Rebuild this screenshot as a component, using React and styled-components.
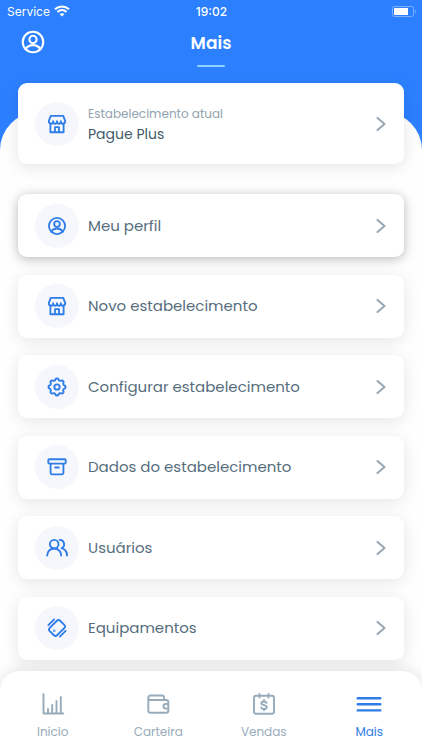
import React, { useState } from 'react'
import styled, { createGlobalStyle } from 'styled-components'

const GlobalStyle = createGlobalStyle`
    *{
        box-sizing: border-box;
    }
    body{
        margin: 0;
        background: #2c80ff;
        font-family: Poppins, Inter, "Open Sans", sans-serif;
    }
    button{
        font-family: inherit;
        border: none;
        padding: 0;
        background: none;
        cursor: pointer;
    }
`;

const Svg = ({ size = 22, width = 2, box = '0 0 24 24', children }) => (
    <svg width={size} height={size} viewBox={box} fill="none" stroke="currentColor"
        strokeWidth={width} strokeLinecap="round" strokeLinejoin="round" aria-hidden="true">
        {children}
    </svg>
)

const UserIcon = ({ size, width }) => (
    <Svg size={size} width={width}>
        <circle cx="12" cy="12" r="8.8" />
        <circle cx="12" cy="9.8" r="3.1" />
        <path d="M5.6 18.2C7 15.8 9.3 14.7 12 14.7s5 1.1 6.4 3.5" />
    </Svg>
)

const StoreIcon = () => (
    <Svg width={2}>
        <path d="M5.2 3.2h13.6l2.2 5.6c0 1.9-1 2.900-2.700 2.900s-2.100-1.100-2.100-2.700c0 1.600-.6 2.700-2.100 2.700S12 10.600 12 9c0 1.600-.6 2.700-2.100 2.700S7.800 10.600 7.800 9c0 1.600-.4 2.700-2.100 2.700S3 10.700 3 8.800z" />
        <path d="M4.800 11.700V21h14.400v-9.300M9.800 21v-5.600h4.400V21" />
    </Svg>
)

// eight soft teeth around the hub
const gearPath = Array.from({ length: 96 }, (_, i) => {
    const t = (i / 96) * Math.PI * 2
    const r = 8.4 + 0.85 * Math.tanh(2 * Math.cos(8 * t))
    return `${(12 + r * Math.cos(t)).toFixed(2)} ${(12 + r * Math.sin(t)).toFixed(2)}`
}).join('L')

const GearIcon = () => (
    <Svg width={2.1}>
        <path d={`M${gearPath}z`} />
        <circle cx="12" cy="12" r="2.9" />
    </Svg>
)

const ArchiveIcon = () => (
    <Svg width={2}>
        <rect x="2.5" y="3.5" width="19" height="4.8" rx="1" />
        <path d="M5 8.300V18a2 2 0 0 0 2 2h10a2 2 0 0 0 2-2V8.300M10 12.500h4" />
    </Svg>
)

const UsersIcon = () => (
    <Svg size={24} width={1.9}>
        <circle cx="9.200" cy="8.200" r="4.300" />
        <path d="M2.200 19.500c0-4 3-7 7-7s7 3 7 7" />
        <path d="M14.600 3.900a4.300 4.300 0 0 1 2 8.200c3.300.9 5.400 3.800 5.400 7.400" />
    </Svg>
)

const DeviceIcon = () => (
    <Svg width={2}>
        <rect x="6.300" y="4" width="11.400" height="16" rx="2.500" transform="rotate(45 12 12)" />
        <path d="M2.600 8.800l6.200-6.200M21.400 15.200l-6.200 6.200" />
        <circle cx="9" cy="15" r=".4" />
    </Svg>
)

const Chevron = () => (
    <svg width="10" height="14" viewBox="0 0 10 14" fill="none" stroke="#97a6b3" strokeWidth="2"
        strokeLinecap="round" strokeLinejoin="round" aria-hidden="true">
        <path d="M1.5 1L8.500 7l-7 6" />
    </svg>
)

const WifiIcon = () => (
    <svg width="16" height="12" viewBox="0 0 16 12" aria-hidden="true">
        <path d="M1 4.300C5 .6 11 .6 15 4.300M3.400 6.900c2.700-2.400 6.500-2.400 9.200 0" fill="none" stroke="#fff" strokeWidth="2" />
        <path d="M8 11.500L5.500 9.100c1.500-1.300 3.500-1.300 5 0z" fill="#fff" />
    </svg>
)

const BatteryIcon = () => (
    <svg width="24" height="11" viewBox="0 0 24 11" aria-hidden="true">
        <rect x=".5" y=".5" width="21" height="10" rx="2" fill="none" stroke="#7db0ff" />
        <rect x="2" y="2" width="14" height="7" rx=".5" fill="#fff" />
        <path d="M23 3.500q1.500 2 0 4z" fill="#8fbcff" />
    </svg>
)

const ChartIcon = () => (
    <Svg size={24} width={1.9}>
        <path d="M2.500 2.300v19.200h19.800M7 21v-4M11.200 21v-8M15.500 21V9M19.800 21V5" />
    </Svg>
)

const WalletIcon = () => (
    <Svg size={24} width={1.9}>
        <path d="M18 8V5.200A1.700 1.700 0 0 0 16.300 3.500H4.500A2.200 2.200 0 0 0 2.300 5.700v13a2 2 0 0 0 2 2h16a2 2 0 0 0 2-2V10a2 2 0 0 0-2-2h-16a2 2 0 0 1-2-2" />
        <path d="M22.300 12h-2.500a2.300 2.300 0 0 0 0 4.600h2.500" />
    </Svg>
)

const SalesIcon = () => (
    <Svg size={24} width={1.9}>
        <rect x="2" y="3.800" width="20" height="18" rx="2.200" />
        <path d="M7.500 2v3.600M16.500 2v3.600" />
        <path d="M14.600 10.800c-.4-1-1.400-1.300-2.600-1.300-1.500 0-2.600.7-2.600 1.800 0 2.600 5.400 1 5.400 3.700 0 1.200-1.200 1.900-2.800 1.900-1.400 0-2.500-.5-2.800-1.500M12 8v1.500M12 17v1.300" />
    </Svg>
)

const MenuIcon = () => (
    <svg width="26" height="24" viewBox="0 0 26 24" stroke="currentColor" strokeWidth="2.4" strokeLinecap="round" aria-hidden="true">
        <path d="M1.700 6.200h22.600M1.700 12.300h22.600M1.700 18.400h22.600" />
    </svg>
)

const menuItems = [
    { id: 1, title: 'Meu perfil', icon: <UserIcon />, raised: true },
    { id: 2, title: 'Novo estabelecimento', icon: <StoreIcon /> },
    { id: 3, title: 'Configurar estabelecimento', icon: <GearIcon /> },
    { id: 4, title: 'Dados do estabelecimento', icon: <ArchiveIcon /> },
    { id: 5, title: 'Usuários', icon: <UsersIcon /> },
    { id: 6, title: 'Equipamentos', icon: <DeviceIcon /> },
]

const tabs = [
    { id: 'inicio', title: 'Início', icon: <ChartIcon /> },
    { id: 'carteira', title: 'Carteira', icon: <WalletIcon /> },
    { id: 'vendas', title: 'Vendas', icon: <SalesIcon /> },
    { id: 'mais', title: 'Mais', icon: <MenuIcon /> },
]

function App() {
    const [active, setActive] = useState('mais')

    return (
        <Page>
            <GlobalStyle />
            <StatusBar>
                <Carrier>Service <WifiIcon /></Carrier>
                <Clock>19:02</Clock>
                <BatteryIcon />
            </StatusBar>
            <Header>
                <ProfileButton aria-label="Perfil"><UserIcon size={28} width={1.8} /></ProfileButton>
                <Title>Mais</Title>
            </Header>
            <Sheet>
                <CurrentCard>
                    <IconCircle><StoreIcon /></IconCircle>
                    <CardText>
                        <Caption>Estabelecimento atual</Caption>
                        <CurrentName>Pague Plus</CurrentName>
                    </CardText>
                    <Chevron />
                </CurrentCard>
                <MenuList>
                    {menuItems.map((item) => (
                        <li key={item.id}>
                            <Card $raised={item.raised}>
                                <IconCircle>{item.icon}</IconCircle>
                                <CardText>{item.title}</CardText>
                                <Chevron />
                            </Card>
                        </li>
                    ))}
                </MenuList>
                <TabBar>
                    {tabs.map((tab) => (
                        <Tab
                            key={tab.id}
                            href={`#${tab.id}`}
                            $active={active === tab.id}
                            onClick={() => setActive(tab.id)}
                        >
                            {tab.icon}
                            <span>{tab.title}</span>
                        </Tab>
                    ))}
                </TabBar>
            </Sheet>
        </Page>
    )
}

const Page = styled.div`
    min-height: 100vh;
    display: flex;
    flex-direction: column;
    background: #2c80ff;
`;

const StatusBar = styled.div`
    display: grid;
    grid-template-columns: 1fr auto 1fr;
    align-items: center;
    height: 22px;
    padding: 0 6px 0 7px;
    color: #fff;
    font-family: Inter, sans-serif;
    font-size: 12px;
    > svg{
        justify-self: end;
    }
`;

const Carrier = styled.span`
    display: flex;
    align-items: center;
    gap: 4px;
`;

const Clock = styled.span`
    font-weight: 500;
`;

const Header = styled.header`
    display: grid;
    grid-template-columns: 28px 1fr 28px;
    align-items: start;
    height: 90px;
    padding: 6px 19px 0;
`;

const ProfileButton = styled.button`
    display: flex;
    color: #fff;
`;

const Title = styled.h1`
    display: flex;
    flex-direction: column;
    align-items: center;
    gap: 7px;
    margin: 0;
    color: #fff;
    font-size: 17px;
    line-height: 30px;
    font-weight: 600;
    &::after{
        content: "";
        width: 28px;
        height: 2px;
        border-radius: 1px;
        background: #8fd0ff;
    }
`;

const Sheet = styled.main`
    flex: 1;
    display: flex;
    flex-direction: column;
    background: #fefefe;
    border-radius: 38px 38px 0 0;
`;

const Card = styled.button`
    display: flex;
    align-items: center;
    gap: 9px;
    width: 100%;
    height: 63px;
    padding: 0 18px 0 17px;
    border-radius: 9px;
    background: #fff;
    color: #566d7c;
    font-size: 15px;
    line-height: 20px;
    text-align: left;
    box-shadow: ${(props) => props.$raised
        ? '0 2px 12px rgba(0, 0, 0, 0.28)'
        : '0 3px 16px rgba(0, 0, 0, 0.1)'};
`;

const CurrentCard = styled(Card)`
    width: auto;
    height: 81px;
    margin: -29px 18px 30px;
`;

const IconCircle = styled.span`
    display: flex;
    align-items: center;
    justify-content: center;
    flex: none;
    width: 44px;
    height: 44px;
    border-radius: 50%;
    background: #f5f7fc;
    color: #2f7de8;
`;

const CardText = styled.span`
    flex: 1;
    display: flex;
    flex-direction: column;
`;

const Caption = styled.span`
    color: #91a3b0;
    font-size: 12px;
`;

const CurrentName = styled.span`
    color: #3f5b6c;
    font-size: 14px;
`;

const MenuList = styled.ul`
    flex: 1;
    display: flex;
    flex-direction: column;
    justify-content: space-between;
    gap: 16px;
    list-style: none;
    margin: 0;
    padding: 0 18px 11px;
`;

const TabBar = styled.nav`
    position: sticky;
    bottom: 0;
    display: grid;
    grid-template-columns: repeat(4, 1fr);
    height: 79px;
    padding-top: 21px;
    border-radius: 20px 20px 0 0;
    background: #fff;
    box-shadow: 0 -2px 14px rgba(0, 0, 0, 0.1);
`;

const Tab = styled.a`
    display: flex;
    flex-direction: column;
    align-items: center;
    gap: 6px;
    color: ${(props) => props.$active ? '#2f7de8' : '#97abba'};
    font-size: 12px;
    line-height: 20px;
    text-decoration: none;
`;

export default App
